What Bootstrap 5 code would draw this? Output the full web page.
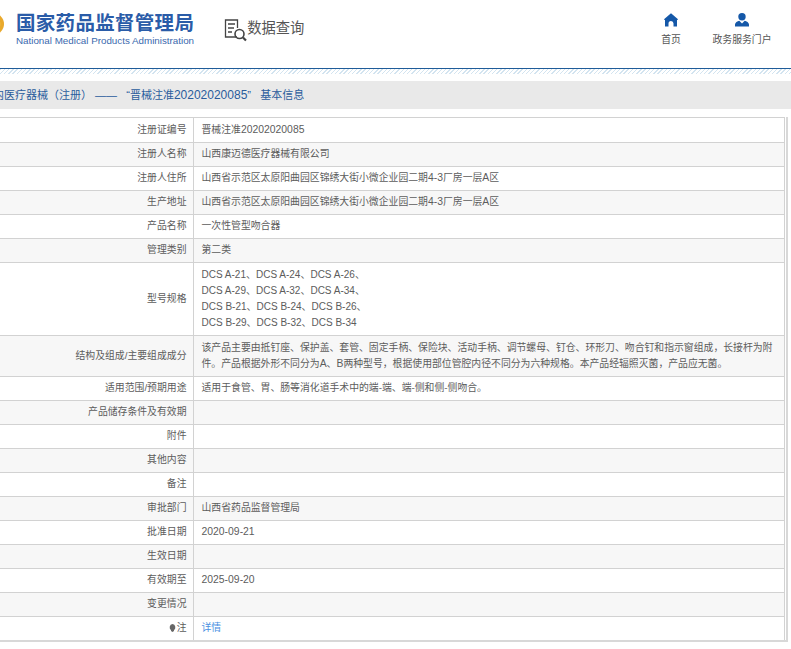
<!DOCTYPE html>
<html lang="zh"><head><meta charset="utf-8">
<link href="https://cdn.jsdelivr.net/npm/bootstrap@5.3.0/dist/css/bootstrap.min.css" rel="stylesheet">
<style>
html,body{height:100%;overflow:hidden}
body{font-family:"Liberation Sans","Noto Sans CJK SC",sans-serif;color:#5c5c5c;font-size:9.85px;background:#fff}
.topbar{height:69px;border-bottom:1px solid #1f5c99}
.emblem{width:22px;height:22px;margin-left:-18px;margin-right:12px;margin-top:13px}
.brand-box{padding-top:11px}
.brand-cn{font-size:19.5px;font-weight:700;color:#2a5ca8;line-height:24px;letter-spacing:.3px}
.brand-en{font-size:9.8px;color:#3a69ae;line-height:12px;white-space:nowrap}
.query{margin-left:30px;margin-top:18px;color:#555;font-size:14.3px;line-height:21px}
.toplink{font-size:9.85px;color:#555;line-height:12px;text-align:center;text-decoration:none;white-space:nowrap}
.toplink svg{display:block;margin:0 auto 7px}
.home-link{width:24px}
.portal-link{width:60px;margin-left:29px;margin-right:19px}
.top-links{padding-top:13px}
.hatch{height:5px;background:repeating-linear-gradient(135deg,#d3e4f0 0 1px,#fff 1px 3px)}
.fade{height:7px;background:linear-gradient(#fff,#f4f4f4)}
.headline{height:28px;background:#e9e9e9;color:#2a5c9c;font-size:11px;line-height:28px;white-space:pre;margin-left:-18px}
.headline .digits{font-size:12px}
.grid-outer{margin:8px 3px 0 -40px;border-right:2px solid #d8d8d8;border-bottom:2px solid #d8d8d8;padding-right:1px}
.grid-wrap{border:solid #d2d2d2;border-width:1px 1px 0 0}
.info{width:100%;table-layout:fixed;border-collapse:collapse;margin:0}
.info td{border-bottom:1px solid #d2d2d2;padding:0 7px 0 8px;line-height:16px;height:24px;vertical-align:middle}
.info tr:last-child td{border-bottom:0}
.info td:first-child{width:233px;text-align:right;border-right:1px solid #d2d2d2;padding-right:6px}
.info tr:nth-child(even) td{background:#f7f7f7}
.info a{color:#4a90e2;text-decoration:none}
.tall td{padding-top:4px;padding-bottom:4px}
.latin{font-size:10.4px}
.models{font-size:10px}
.bulb{vertical-align:-1px;margin-right:1px}
</style></head><body>
<header class="topbar d-flex">
 <svg class="emblem flex-shrink-0" viewBox="0 0 24 24"><circle cx="12" cy="12" r="12" fill="#e9a92c"/><circle cx="12" cy="12" r="8" fill="#f6c94a"/></svg>
 <div class="brand-box">
  <div class="brand-cn">国家药品监督管理局</div>
  <div class="brand-en">National Medical Products Administration</div>
 </div>
 <div class="query d-flex"><svg width="23" height="24" viewBox="0 0 23 24" fill="none" stroke="#444" stroke-width="1.3"><path d="M13 19H1.5V2h12v8M4 6h7M4 10h6M4 14h4"/><circle cx="15.5" cy="16" r="4.5" stroke-width="1.6"/><path d="M19 19.5l3 3" stroke-width="2.2"/></svg><span>数据查询</span></div>
 <div class="top-links d-flex ms-auto">
  <a class="toplink home-link" href="#"><svg width="14" height="14" viewBox="0 0 14 14" fill="#1558a8"><path fill-rule="evenodd" d="M7 0.3L14 6.2L13.4 7H13V13.5H1V7H0.6L0 6.2ZM4.5 13.5H9.5V10.5A2.5 2.5 0 0 0 4.5 10.5Z"/></svg>首页</a>
  <a class="toplink portal-link" href="#"><svg width="14" height="14" viewBox="0 0 14 14" fill="#1558a8"><circle cx="7" cy="3.7" r="3.7"/><path d="M0 13.5V11.5C0 9.5 2.5 8.5 4.3 7.8L7 10.5L9.7 7.8C11.5 8.5 14 9.5 14 11.5V13.5Z"/></svg>政务服务门户</a>
 </div>
</header>
<div class="hatch"></div><div class="fade"></div>
<div class="headline">境内医疗器械（注册） ——   “晋械注准<span class="digits">20202020085</span>”   基本信息</div>
<div class="grid-outer"><div class="grid-wrap"><table class="info"><tbody>
<tr><td>注册证编号</td><td>晋械注准<span class="latin">20202020085</span></td></tr>
<tr><td>注册人名称</td><td>山西康迈德医疗器械有限公司</td></tr>
<tr><td>注册人住所</td><td>山西省示范区太原阳曲园区锦绣大街小微企业园二期<span class="latin">4-3</span>厂房一层<span class="latin">A</span>区</td></tr>
<tr><td>生产地址</td><td>山西省示范区太原阳曲园区锦绣大街小微企业园二期<span class="latin">4-3</span>厂房一层<span class="latin">A</span>区</td></tr>
<tr><td>产品名称</td><td>一次性管型吻合器</td></tr>
<tr><td>管理类别</td><td>第二类</td></tr>
<tr class="tall"><td>型号规格</td><td class="models">DCS A-21、DCS A-24、DCS A-26、<br>DCS A-29、DCS A-32、DCS A-34、<br>DCS B-21、DCS B-24、DCS B-26、<br>DCS B-29、DCS B-32、DCS B-34</td></tr>
<tr class="tall"><td>结构及组成/主要组成成分</td><td>该产品主要由抵钉座、保护盖、套管、固定手柄、保险块、活动手柄、调节螺母、钉仓、环形刀、吻合钉和指示窗组成，长接杆为附件。产品根据外形不同分为<span class="latin">A</span>、<span class="latin">B</span>两种型号，根据使用部位管腔内径不同分为六种规格。本产品经辐照灭菌，产品应无菌。</td></tr>
<tr><td>适用范围/预期用途</td><td>适用于食管、胃、肠等消化道手术中的端-端、端-侧和侧-侧吻合。</td></tr>
<tr><td>产品储存条件及有效期</td><td></td></tr>
<tr><td>附件</td><td></td></tr>
<tr><td>其他内容</td><td></td></tr>
<tr><td>备注</td><td></td></tr>
<tr><td>审批部门</td><td>山西省药品监督管理局</td></tr>
<tr><td>批准日期</td><td><span class="latin">2020-09-21</span></td></tr>
<tr><td>生效日期</td><td></td></tr>
<tr><td>有效期至</td><td><span class="latin">2025-09-20</span></td></tr>
<tr><td>变更情况</td><td></td></tr>
<tr><td><svg class="bulb" width="7" height="8" viewBox="0 0 7 8" fill="#666"><path d="M3.5 0A3.5 3.5 0 0 1 5 6.2V7L3.5 8L2 7V6.2A3.5 3.5 0 0 1 3.5 0Z"/></svg>注</td><td><a href="#">详情</a></td></tr>
</tbody></table></div></div>
<script src="https://cdn.jsdelivr.net/npm/bootstrap@5.3.0/dist/js/bootstrap.bundle.min.js"></script>
</body></html>
